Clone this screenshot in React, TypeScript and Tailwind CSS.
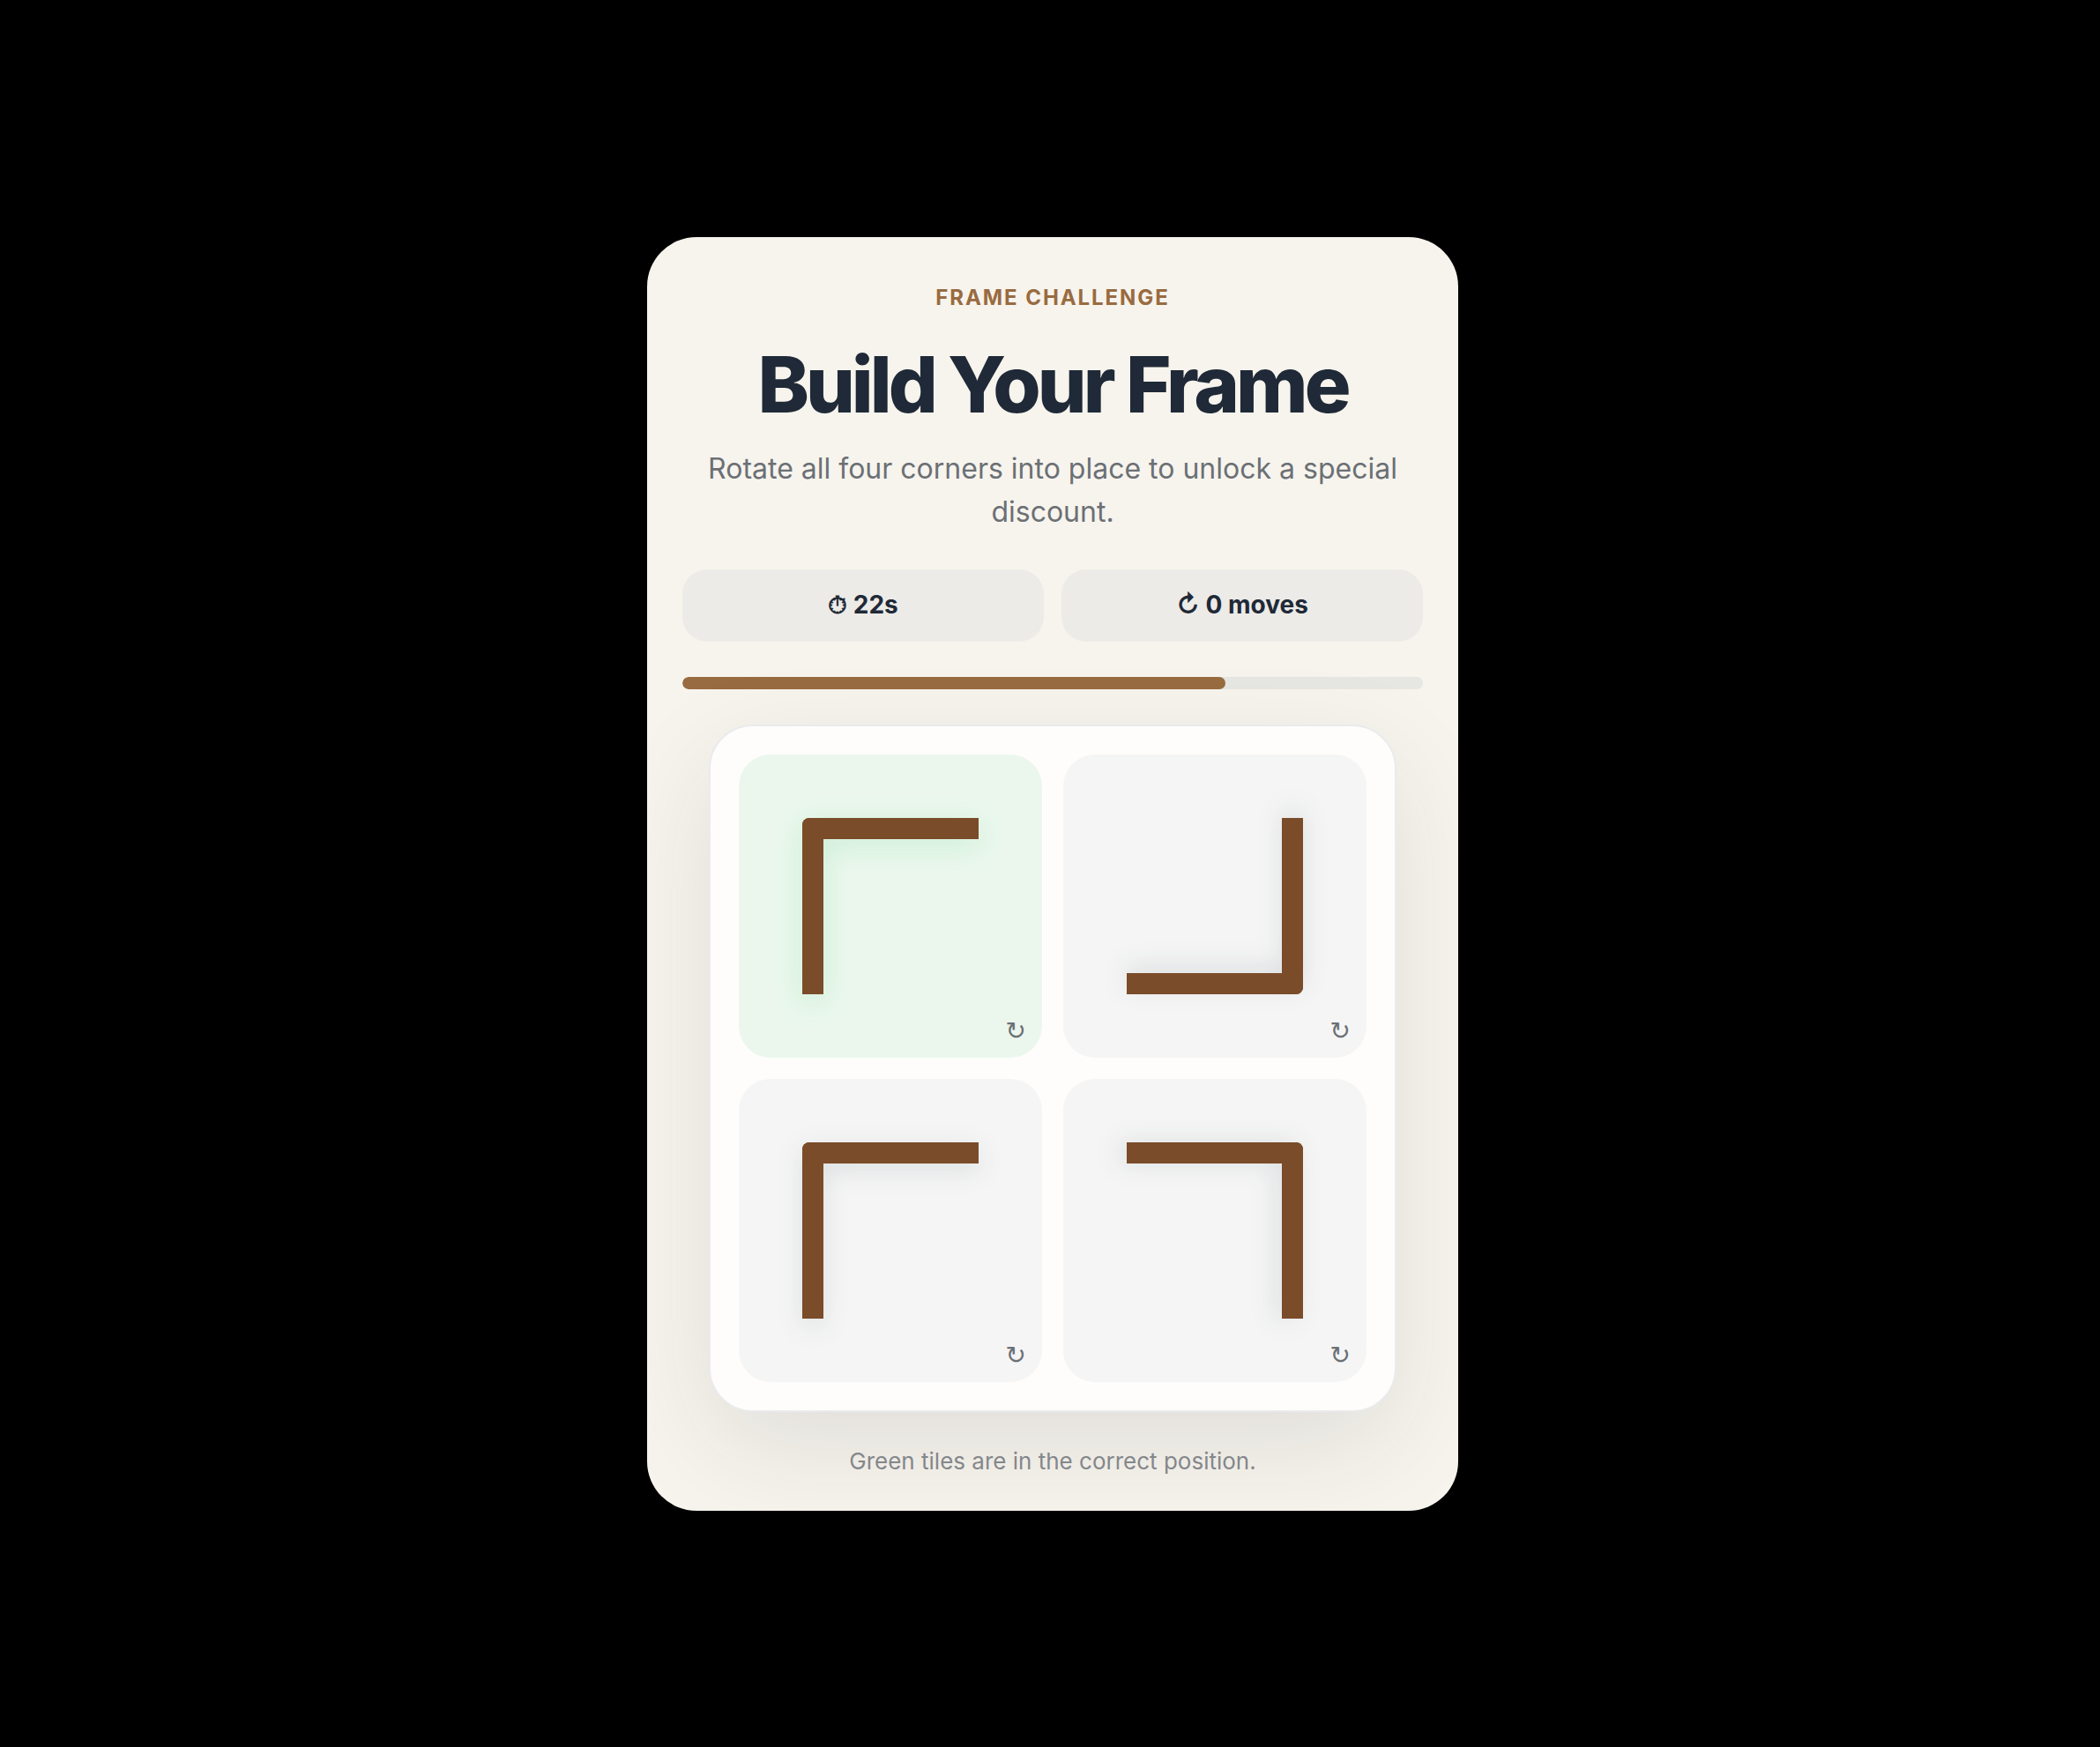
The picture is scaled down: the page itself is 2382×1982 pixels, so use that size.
import { useState } from "react";

const SOLVED_TURNS = [0, 1, 3, 2];

const TURN_CLASSES = ["rotate-0", "rotate-90", "rotate-180", "rotate-270"];

type TileProps = {
  index: number;
  turn: number;
  onRotate: () => void;
};

function Tile({ index, turn, onRotate }: TileProps) {
  const solved = turn === SOLVED_TURNS[index];
  return (
    <button
      type="button"
      onClick={onRotate}
      aria-label={`Rotate corner ${index + 1}`}
      className={`relative flex aspect-square items-center justify-center rounded-[36px] ${
        solved ? "bg-[#ebf7ed]" : "bg-[#f5f5f5]"
      }`}
    >
      <span
        className={`relative block size-[200px] ${TURN_CLASSES[turn]} ${
          solved
            ? "drop-shadow-[0_8px_16px_rgba(34,197,94,0.16)]"
            : "drop-shadow-[0_8px_14px_rgba(31,41,55,0.11)]"
        }`}
      >
        <span className="absolute inset-x-0 top-0 h-6 rounded-tl-lg bg-[#7a4c2a]" />
        <span className="absolute inset-y-0 left-0 w-6 rounded-tl-lg bg-[#7a4c2a]" />
      </span>
      <span
        aria-hidden="true"
        className="absolute right-[18px] bottom-3 font-['DejaVu_Sans',sans-serif] text-[28px] leading-9 text-[#6b7075]"
      >
        ↻
      </span>
    </button>
  );
}

export default function App() {
  const [turns, setTurns] = useState([0, 2, 0, 1]);
  const [moves, setMoves] = useState(0);
  const secondsLeft = 22;
  const totalSeconds = 30;

  const rotate = (index: number) => {
    setTurns(turns.map((turn, i) => (i === index ? (turn + 1) % 4 : turn)));
    setMoves(moves + 1);
  };

  return (
    <div className="flex min-h-screen items-center justify-center bg-black pl-1.5 font-['Inter',sans-serif]">
      <main className="w-full max-w-[920px] overflow-hidden rounded-[56px] bg-[#f7f4ed] px-10 pt-[49px] pb-9 text-center">
        <p className="text-2xl leading-10 font-bold tracking-[0.08em] text-[#996b41] uppercase">Frame Challenge</p>
        <h1 className="mt-[34px] text-[88px] leading-[88px] font-extrabold tracking-[-4px] text-[#1f2937]">
          Build Your Frame
        </h1>
        <p className="mt-[27px] text-[32px] leading-[49px] text-[#6b7075]">
          Rotate all four corners into place to unlock a special discount.
        </p>

        <div className="mt-[41px] grid grid-cols-2 gap-5 text-[28px] leading-[34px] font-bold text-[#1f2937]">
          <div className="rounded-[28px] bg-[#ecebe7] pt-[23px] pb-[25px]">⏱ {secondsLeft}s</div>
          <div className="rounded-[28px] bg-[#ecebe7] pt-[23px] pb-[25px]">↻ {moves} moves</div>
        </div>

        <div
          role="progressbar"
          aria-label="Time left"
          aria-valuenow={secondsLeft}
          aria-valuemax={totalSeconds}
          className="mt-10 h-3.5 overflow-hidden rounded-full bg-[#e6e7e2]"
        >
          <div
            className="h-full rounded-full bg-[#996b41]"
            style={{ width: `${(secondsLeft / totalSeconds) * 100}%` }}
          />
        </div>

        <section
          aria-label="Frame board"
          className="mx-auto mt-10 grid max-w-[780px] grid-cols-2 gap-6 rounded-[50px] border-2 border-[#e9ebec] bg-[#fefdfb] p-8 shadow-[0_40px_120px_rgba(31,41,55,0.10)]"
        >
          {turns.map((turn, index) => (
            <Tile key={index} index={index} turn={turn} onRotate={() => rotate(index)} />
          ))}
        </section>

        <p className="mt-9 text-[26px] leading-10 text-[#84878a]">Green tiles are in the correct position.</p>
      </main>
    </div>
  );
}
